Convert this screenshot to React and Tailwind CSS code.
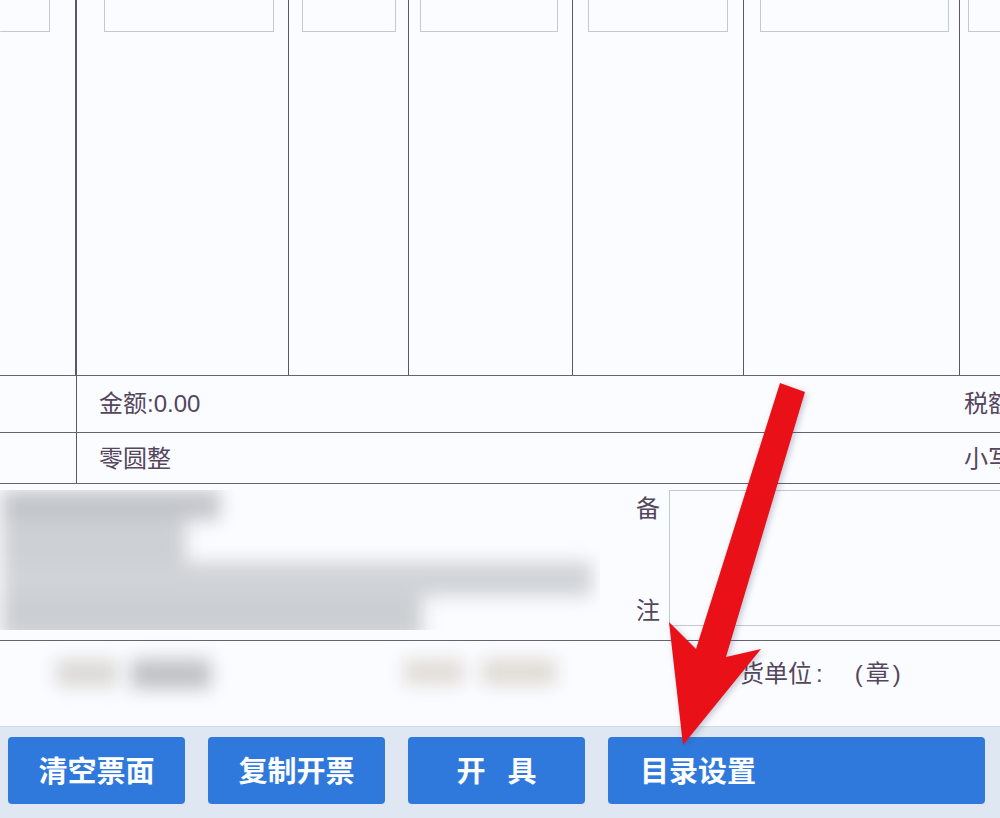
const FONT = "font-['Liberation_Sans','Noto_Sans_CJK_SC',sans-serif]";

const columns = [
  { cell: 'w-[77px] pr-[25px] border-r-2', box: 'border-l-0 rounded-l-none' },
  { cell: 'w-[212px] pl-[27px] pr-[14px] border-r', box: '' },
  { cell: 'w-[120px] pl-[13px] pr-[12px] border-r', box: '' },
  { cell: 'w-[164px] pl-[11px] pr-[14px] border-r', box: '' },
  { cell: 'w-[171px] pl-[15px] pr-[15px] border-r', box: '' },
  { cell: 'w-[216px] pl-[16px] pr-[10px] border-r', box: '' },
  { cell: 'w-[60px] pl-[8px]', box: '' },
];

const Blur = ({ className }) => <div className={`shrink-0 blur-[9px] ${className}`} />;

const App = () => {
  return (
    <div className={`w-[1000px] h-[818px] relative overflow-hidden flex flex-col bg-[#fbfcff] text-[#54465c] text-[24px] leading-none ${FONT}`}>
      {/* item table */}
      <div className="flex h-[376px] shrink-0 border-b border-[#66626e]">
        {columns.map((col, i) => (
          <div key={i} className={`h-full shrink-0 border-[#5d5470] ${col.cell}`}>
            <div className={`h-[32px] border border-t-0 border-[#c3c9d0] rounded-b-[1px] ${col.box}`} />
          </div>
        ))}
      </div>

      {/* totals */}
      <div className="flex h-[57px] shrink-0 border-b border-[#66626e]">
        <div className="w-[77px] border-r border-[#5d5470]" />
        <div className="flex-1 pl-[22px] flex items-center">金额:0.00</div>
        <div className="w-[36px] flex items-center whitespace-nowrap">税额:0.00</div>
      </div>
      <div className="flex h-[51px] shrink-0 border-b border-[#66626e]">
        <div className="w-[77px] border-r border-[#5d5470]" />
        <div className="flex-1 pl-[22px] pt-[2px] flex items-center">零圆整</div>
        <div className="w-[36px] pt-[2px] flex items-center whitespace-nowrap">小写:0.00</div>
      </div>

      {/* seller info + remarks */}
      <div className="flex h-[157px] shrink-0 border-b border-[#66626e] pt-[6px]">
        <div className="w-[636px] shrink-0">
          <div className="w-[600px] h-[140px] overflow-hidden">
            <div className="blur-[9px]">
              <div className="w-[218px] h-[30px] ml-[2px] bg-[#c2c5ca]" />
              <div className="w-[184px] h-[42px] ml-[2px] bg-[#cdd0d4]" />
              <div className="w-[590px] h-[34px] ml-[2px] bg-[#d0d3d7]" />
              <div className="w-[420px] h-[44px] ml-[2px] bg-[#cbced2]" />
            </div>
          </div>
        </div>
        <div className="w-[33px] h-[135px] shrink-0 flex flex-col justify-between items-center pt-[7px] pb-[2px] pr-[9px]">
          <span>备</span>
          <span>注</span>
        </div>
        <div className="w-[340px] h-[136px] shrink-0 border border-[#c3c9d0]" />
      </div>

      {/* signatures */}
      <div className="h-[85px] shrink-0 relative flex items-start pt-[18px]">
        <Blur className="w-[62px] h-[28px] ml-[56px] bg-[#dbd9d7]" />
        <Blur className="w-[80px] h-[30px] ml-[13px] bg-[#bfc1c6]" />
        <Blur className="w-[60px] h-[26px] ml-[193px] bg-[#e0dcd7]" />
        <Blur className="w-[74px] h-[26px] ml-[18px] bg-[#dfdad5]" />
        <div className="absolute left-[740px] top-[21px] flex items-center whitespace-nowrap">
          <span>货单位<span className="ml-[4px]">:</span></span>
          <span className="ml-[32px] tracking-[3px]">(章)</span>
        </div>
      </div>

      {/* actions */}
      <div className="flex-1 bg-[#dfe7f2] border-t border-[#cfdbe6] pt-[10px] pl-[8px] flex gap-[23px] text-white text-[29px] font-bold">
        <button className="w-[177px] h-[67px] pt-[3px] bg-[#2f79dc] rounded-[4px]">清空票面</button>
        <button className="w-[177px] h-[67px] pt-[3px] bg-[#2f79dc] rounded-[4px]">复制开票</button>
        <button className="w-[177px] h-[67px] pt-[3px] bg-[#2f79dc] rounded-[4px] [word-spacing:14px]">开 具</button>
        <button className="w-[377px] h-[67px] pt-[3px] bg-[#2f79dc] rounded-[4px] text-left pl-[32px]">目录设置</button>
      </div>

      {/* annotation arrow */}
      <svg className="absolute left-0 top-0 w-[1000px] h-[818px] pointer-events-none drop-shadow-[2px_2px_3px_rgba(60,70,120,0.3)]" viewBox="0 0 1000 818">
        <polygon points="780,383 805,392 726,657 761,649 683,745 669,622 696,649" fill="#ea1018" />
      </svg>
    </div>
  );
};

export default App;
